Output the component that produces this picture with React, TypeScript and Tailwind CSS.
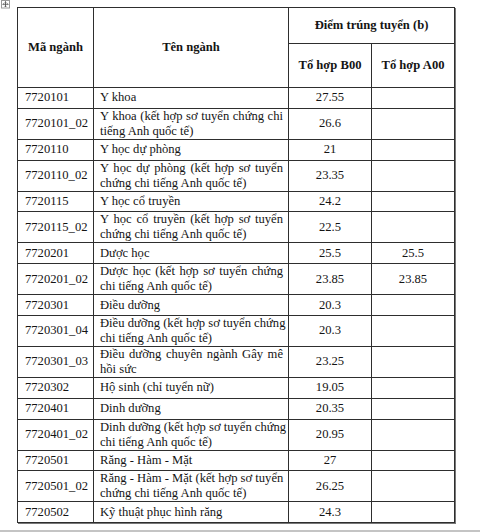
import React from "react";

type Row = {
  code: string;
  name: string[];
  b00: string;
  a00?: string;
};

const rows: Row[] = [
  { code: "7720101", name: ["Y khoa"], b00: "27.55" },
  { code: "7720101_02", name: ["Y khoa (kết hợp sơ tuyển chứng chi", "tiếng Anh quốc tế)"], b00: "26.6" },
  { code: "7720110", name: ["Y học dự phòng"], b00: "21" },
  { code: "7720110_02", name: ["Y học dự phòng (kết hợp sơ tuyển", "chứng chi tiếng Anh quốc tế)"], b00: "23.35" },
  { code: "7720115", name: ["Y học cổ truyền"], b00: "24.2" },
  { code: "7720115_02", name: ["Y học cổ truyền (kết hợp sơ tuyển", "chứng chi tiếng Anh quốc tế)"], b00: "22.5" },
  { code: "7720201", name: ["Dược học"], b00: "25.5", a00: "25.5" },
  { code: "7720201_02", name: ["Dược học (kết hợp sơ tuyển chứng", "chi tiếng Anh quốc tế)"], b00: "23.85", a00: "23.85" },
  { code: "7720301", name: ["Điều dưỡng"], b00: "20.3" },
  { code: "7720301_04", name: ["Điều dưỡng (kết hợp sơ tuyển chứng", "chi tiếng Anh quốc tế)"], b00: "20.3" },
  { code: "7720301_03", name: ["Điều dưỡng chuyên ngành Gây mê", "hồi sức"], b00: "23.25" },
  { code: "7720302", name: ["Hộ sinh (chỉ tuyển nữ)"], b00: "19.05" },
  { code: "7720401", name: ["Dinh dưỡng"], b00: "20.35" },
  { code: "7720401_02", name: ["Dinh dưỡng (kết hợp sơ tuyển chứng", "chi tiếng Anh quốc tế)"], b00: "20.95" },
  { code: "7720501", name: ["Răng - Hàm - Mặt"], b00: "27" },
  { code: "7720501_02", name: ["Răng - Hàm - Mặt (kết hợp sơ tuyển", "chứng chi tiếng Anh quốc tế)"], b00: "26.25" },
  { code: "7720502", name: ["Kỹ thuật phục hình răng"], b00: "24.3" },
];

function MoveHandle() {
  return (
    <svg width="10" height="9" viewBox="0 0 10 9" className="absolute left-[1px] top-0">
      <rect x="0.5" y="0.5" width="8" height="7.5" fill="#fff" stroke="#9a9a9a" strokeWidth="1" />
      <path d="M4.5 1.5v5.5M1.8 4.25h5.4" stroke="#555" strokeWidth="0.9" />
      <path d="M3.6 2.4l0.9-0.9 0.9 0.9M3.6 6.1l0.9 0.9 0.9-0.9M2.7 3.35l-0.9 0.9 0.9 0.9M6.3 3.35l0.9 0.9-0.9 0.9" stroke="#555" strokeWidth="0.7" fill="none" />
    </svg>
  );
}

export default function App() {
  const cell = "border border-[#2e2e2e] align-middle p-0";
  return (
    <div className="relative w-[480px] h-[532px] bg-white overflow-hidden [font-family:'Liberation_Serif',serif] text-[12.6px] leading-[15px] text-[#141414]">
      <MoveHandle />
      <div className="pl-[17px] pt-[7px]">
        <table className="table-fixed border-collapse w-[437px] shadow-[1px_1px_0_#777]">
          <colgroup>
            <col className="w-[76px]" />
            <col className="w-[195px]" />
            <col className="w-[83px]" />
            <col className="w-[83px]" />
          </colgroup>
          <thead>
            <tr className="h-[36px]">
              <th rowSpan={2} className={`${cell} font-bold text-center`}>
                Mã ngành
              </th>
              <th rowSpan={2} className={`${cell} font-bold text-center`}>
                Tên ngành
              </th>
              <th colSpan={2} className={`${cell} font-bold text-center`}>
                Điểm trúng tuyển (b)
              </th>
            </tr>
            <tr className="h-[44px]">
              <th className={`${cell} font-bold text-center`}>Tổ hợp B00</th>
              <th className={`${cell} font-bold text-center`}>Tổ hợp A00</th>
            </tr>
          </thead>
          <tbody>
            {rows.map((r) => {
              const double = r.name.length > 1;
              return (
                <tr key={r.code} className={double ? "h-[30.5px]" : "h-[20.8px]"}>
                  <td className={`${cell} pl-[7px]`}>{r.code}</td>
                  <td className={`${cell} pl-[6px] pr-[5px]`}>
                    {double ? (
                      <>
                        <div className="text-justify [text-align-last:justify] whitespace-nowrap">{r.name[0]}</div>
                        <div>{r.name[1]}</div>
                      </>
                    ) : (
                      r.name[0]
                    )}
                  </td>
                  <td className={`${cell} text-center`}>{r.b00}</td>
                  <td className={`${cell} text-center`}>{r.a00 ?? ""}</td>
                </tr>
              );
            })}
          </tbody>
        </table>
      </div>
      <div className="absolute left-0 right-0 bottom-0 h-[2px] bg-[#c4c4c4]" />
    </div>
  );
}
